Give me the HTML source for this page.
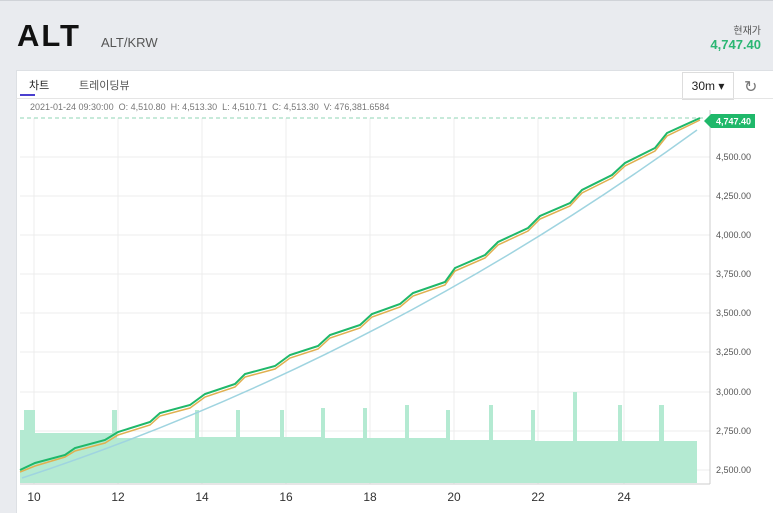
<!DOCTYPE html><html><head><style>
body{margin:0;width:773px;height:512px;background:#e9ebef;font-family:"Liberation Sans","Noto Sans CJK KR",sans-serif;overflow:hidden;position:relative}
.a{position:absolute}
</style></head><body>
<div class="a" style="left:0;top:0;width:773px;height:1px;background:#d0d3d8"></div>
<div class="a" style="left:17px;top:18px;font-size:31px;font-weight:900;letter-spacing:2px;color:#111">ALT</div>
<div class="a" style="left:101px;top:35px;font-size:13px;color:#555">ALT/KRW</div>
<div class="a" style="right:12px;top:22px;font-size:10px;color:#555">현재가</div>
<div class="a" style="right:12px;top:37px;font-size:13px;color:#2bb673;font-weight:bold">4,747.40</div>
<div class="a" style="left:16px;top:70px;width:757px;height:442px;background:#fff;border-top:1px solid #dde0e4;border-left:1px solid #dde0e4"></div>
<div class="a" style="left:29px;top:77px;font-size:11px;color:#222">차트</div>
<div class="a" style="left:20px;top:94px;width:15px;height:2px;background:#4a3fcf"></div>
<div class="a" style="left:79px;top:77px;font-size:11px;color:#555">트레이딩뷰</div>
<div class="a" style="left:682px;top:72px;width:50px;height:26px;border:1px solid #ddd;font-size:12px;line-height:26px;text-align:center;color:#222">30m ▾</div>
<div class="a" style="left:744px;top:77px;font-size:16px;color:#777">↻</div>
<div class="a" style="left:16px;top:98px;width:757px;height:1px;background:#e5e5e5"></div>
<div class="a" style="left:30px;top:102px;font-size:9px;color:#777;white-space:nowrap">2021-01-24 09:30:00 &nbsp;O: 4,510.80 &nbsp;H: 4,513.30 &nbsp;L: 4,510.71 &nbsp;C: 4,513.30 &nbsp;V: 476,381.6584</div>
<svg class="a" style="left:0;top:0" width="773" height="512">
<g stroke="#ececec" stroke-width="1">
<line x1="34" y1="118" x2="34" y2="484"/><line x1="118" y1="118" x2="118" y2="484"/><line x1="202" y1="118" x2="202" y2="484"/><line x1="286" y1="118" x2="286" y2="484"/><line x1="370" y1="118" x2="370" y2="484"/><line x1="454" y1="118" x2="454" y2="484"/><line x1="538" y1="118" x2="538" y2="484"/><line x1="624" y1="118" x2="624" y2="484"/>
<line x1="20" y1="157" x2="710" y2="157"/><line x1="20" y1="196" x2="710" y2="196"/><line x1="20" y1="235" x2="710" y2="235"/><line x1="20" y1="274" x2="710" y2="274"/><line x1="20" y1="313" x2="710" y2="313"/><line x1="20" y1="352" x2="710" y2="352"/><line x1="20" y1="392" x2="710" y2="392"/><line x1="20" y1="431" x2="710" y2="431"/><line x1="20" y1="470" x2="710" y2="470"/>
</g>
<path fill="#b4ead2" d="M20 483V430H24V410H35V433H112V410H117V438H195V410H199V437H236V410H240V437H280V410H284V437H321V408H325V438H363V408H367V438H405V405H409V438H446V410H450V440H489V405H493V440H531V410H535V441H573V392H577V441H618V405H622V441H659V405H664V441H697V483Z"/>
<line x1="20" y1="118" x2="705" y2="118" stroke="#8fd6b5" stroke-dasharray="4,3"/>
<path fill="none" stroke="#9fd4e0" stroke-width="1.5" d="M22 478Q380 360 697 130"/>
<polyline fill="none" stroke="#e0b050" stroke-width="1.5" points="20,472 35,466 65,457 75,451 105,443 118,435 150,425 160,416 190,408 205,397 235,387 245,377 275,369 290,358 318,349 330,338 360,328 372,317 400,307 413,296 445,285 455,271 485,258 498,245 528,231 540,219 570,206 582,193 612,178 625,166 655,151 667,136 700,120"/>
<polyline fill="none" stroke="#1fb86a" stroke-width="2" points="20,470 35,463 65,455 75,448 105,440 118,432 150,422 160,413 190,405 205,394 235,384 245,374 275,366 290,355 318,346 330,335 360,325 372,314 400,304 413,293 445,282 455,268 485,255 498,242 528,228 540,216 570,203 582,190 612,175 625,163 655,148 667,133 700,118"/>
<line x1="710" y1="110" x2="710" y2="484" stroke="#ccc"/>
<line x1="20" y1="484" x2="710" y2="484" stroke="#ccc"/>
<path fill="#1fb86a" d="M704 121L711 114H755V128H711Z"/>
<text x="716" y="124.5" font-size="9" fill="#fff" font-weight="bold" font-family="Liberation Sans">4,747.40</text>
<g font-size="9" fill="#555" font-family="Liberation Sans">
<text x="716" y="160">4,500.00</text><text x="716" y="199">4,250.00</text><text x="716" y="238">4,000.00</text><text x="716" y="277">3,750.00</text><text x="716" y="316">3,500.00</text><text x="716" y="355">3,250.00</text><text x="716" y="395">3,000.00</text><text x="716" y="434">2,750.00</text><text x="716" y="473">2,500.00</text>
</g>
<g font-size="12" fill="#333" font-family="Liberation Sans" text-anchor="middle">
<text x="34" y="501">10</text><text x="118" y="501">12</text><text x="202" y="501">14</text><text x="286" y="501">16</text><text x="370" y="501">18</text><text x="454" y="501">20</text><text x="538" y="501">22</text><text x="624" y="501">24</text>
</g>
</svg>
</body></html>
